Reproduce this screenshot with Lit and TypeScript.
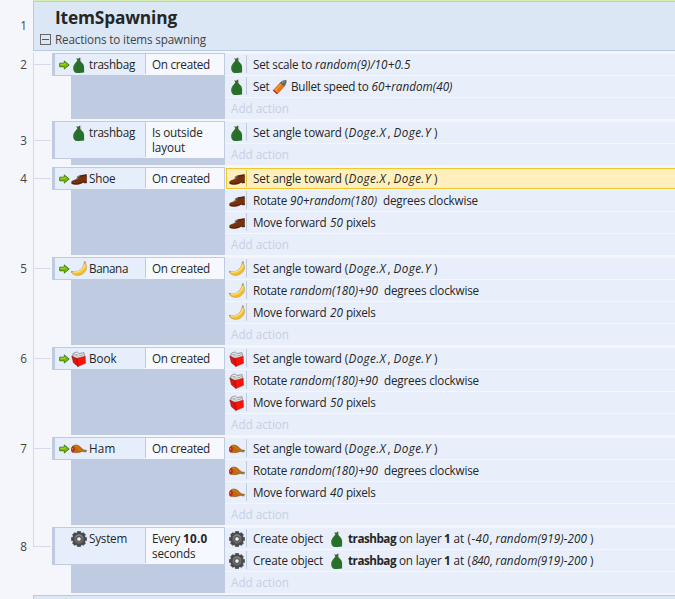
import { LitElement, html, css, svg, nothing } from 'lit';
import { customElement, property } from 'lit/decorators.js';
import { classMap } from 'lit/directives/class-map.js';

type Kind = 'n' | 'i' | 'b' | 'icon';
// text (or icon name), kind, distance to the next run, text width
type Run = [string, Kind, number, number];
interface Action { icon: string; runs: Run[]; selected?: boolean }
interface EventBlock {
  no: number; trigger: boolean; icon: string; name: Run;
  cond: Run[][]; actions: Action[];
}

const icons: Record<string, unknown> = {
  trashbag: svg`
    <path d="m5.2 1.3 2 .5L8.6.6l.9 1.2-.5 2.4H6.7z" fill="#3d6237"/>
    <path d="M6.2 3.6h3c.4 1.5 3.7 2.8 3.9 6.4v5.6c-2.6.5-6 .5-8.8.1C2.9 14.6 2.2 13 2.3 11c.1-3.9 3-5.2 3.9-7.4z" fill="#27702a"/>
    <path d="M4.2 15.2c-1-1.1-1.5-2.6-1.4-4.3.1-1.6.8-2.9 1.7-3.9" fill="none" stroke="#40803f" stroke-width=".6"/>
    <path d="m9 1 1.1-.6.1 1.2zm.1 1.8 1.2.7-.4.9z" fill="#cc949b"/>`,
  shoe: svg`
    <path d="M9.2 4.6 15.6 3.4c.4 1.5.3 3.2.1 4.8l.1 3.6-2.7.3-.7-.8-2.2 1.1c-2.6 1.3-6.8 1.5-9.3.4-.6-.6-.4-1.9 0-2.5 1-1 3.2-1.2 4.3-1.9 1.2-.8 1.3-2.5 2.1-3.1z" fill="#7a3009" stroke="#56382b" stroke-width=".5"/>
    <path d="m8.7 4.7 6.6-1.2-1 1.3-5 1z" fill="#3a2720"/>
    <path d="m5.6 5.3 2.9-.9.1 1-2.4.9zm-.4 1.9 2.6-.2-.8 1-2.1.2z" fill="#8b8a84"/>
    <path d="M.9 12.3c3 .9 6.6.7 9.3-.6l2.2-1 .8.9 2.6-.3" fill="none" stroke="#3a211a" stroke-width=".8"/>`,
  banana: svg`
    <path d="m13.3.8 1.3.1-.1 1.8c1.3 1.6 1.6 4.1.6 6.2-1.6 3.6-5.1 5.6-8.8 5.5-2.6-.1-4.7-1.2-5.7-2.9l.2-1.2C3.3 11.1 6.7 10.9 9 8.9c2.3-1.9 3.6-3.9 3.9-6z" fill="#f7c733" stroke="#b89b62" stroke-width=".6"/>
    <path d="M1.6 11c4.1.9 9.1-.6 11.4-4.7.5-.9.7-2 .7-2.9" fill="none" stroke="#ffe388" stroke-width="1.1"/>
    <path d="M1.6 12.6c4.7 2 10.9-.1 12.7-5" fill="none" stroke="#eab02a" stroke-width=".9"/>
    <path d="m13.1.6 1.5.1-.1 1.5-1.4.2z" fill="#a79b81"/><path d="m.4 10 1.1.6-.4 1.1-.7-.5z" fill="#777264"/>`,
  book: svg`
    <path d="M1 5.1 2.6 2 6 .9l1.9 1.6L13 1.6l.8 4-5.9 4.2L1.8 7z" fill="#c5c8cb" stroke="#77797b" stroke-width=".6"/>
    <path d="m3.3 3 3.1-.9 1.1 2.3M3 4.7l3.6.3m1.8-.9 4-1.1m-4 2.7 4.7-1.4" fill="none" stroke="#f5f5f5" stroke-width=".9"/>
    <path d="m3.5 3.9 3 .1m2.2.8 3.9-1.1" stroke="#76797c" stroke-width=".6"/>
    <path d="M.8 5.1 6 7.6l.9 7.8-4.5-3.6z" fill="#dc1510" stroke="#8c1916" stroke-width=".5"/>
    <path d="m6 7.6 8.2-2.4.3 7.1-7.6 3.1z" fill="#fb1209" stroke="#b01915" stroke-width=".5"/>
    <path d="m6 7.6.9 7.8" stroke="#8a1714" stroke-width=".7"/>`,
  ham: svg`
    <path d="M.9 6.4c.9-2.2 3-2.7 5.1-2.3 3 .6 4.4 3.2 6.4 4.7l3 .4.3.7-2.2 1-2.2-.4-3.2.9c-2.3.5-5.2.4-7-.1C.2 10.2.3 7.9.9 6.4z" fill="#c1690c" stroke="#795827" stroke-width=".5"/>
    <path d="M3.5 5.1C6.2 4.9 7 6.7 9.6 9" fill="none" stroke="#d88420" stroke-width=".9"/>
    <ellipse cx="2" cy="8.3" rx="1.5" ry="2.7" fill="#dc1d16" stroke="#8c2723" stroke-width=".4"/>
    <path d="M1.6 7v1.6" stroke="#f3a49c" stroke-width=".7"/>
    <path d="m12.2 9.6 3.4.2m-2.3.6 2.1.7" stroke="#837a68" stroke-width=".8"/>`,
  gear: svg`
    <g fill="#505050" stroke="#303030" stroke-width=".4">
      ${[0, 45, 90, 135, 180, 225, 270, 315].map(a => svg`<path d="M5.9 3 6.4.3h3.2l.5 2.7z" transform="rotate(${a} 8 8)"/>`)}
      <circle cx="8" cy="8" r="6.2"/>
    </g>
    <circle cx="8" cy="8" r="4.4" fill="#6c6c6c"/>
    <path d="M4.2 6.3a4.2 4.2 0 0 1 7.6 0" fill="none" stroke="#929292" stroke-width=".9"/>
    <circle cx="8" cy="8" r="2.3" fill="#eef1f7" stroke="#3b3b3b" stroke-width=".8"/>`,
  bullet: svg`
    <path d="m1.6 11.1 6.7-7.3 3.9 3.5-6.7 7.5z" fill="#e9780f" stroke="#b94a18" stroke-width=".6"/>
    <path d="m3.7 10.9 5.9-6.4" stroke="#f9a63a" stroke-width="1.1"/>
    <path d="M8.3 3.8C9.8 2.1 11.8 1.2 14.2 1.3c.1 2.3-.4 4.2-2 6z" fill="#66696c" stroke="#505356" stroke-width=".5"/>
    <path d="m10.1 3.5 2.3-1" stroke="#aaa" stroke-width=".8"/>
    <path d="m1.3 11.2 4 3.6" stroke="#ba2620" stroke-width="1.3"/>
    <path d="m2.4 10.2 3.9 3.5" stroke="#f3b57f" stroke-width=".6"/>`,
};

const angle: Run[] = [
  ['Set angle toward (', 'n', 95.5, 95], ['Doge.X', 'i', 39, 37.5], [',', 'n', 6, 3],
  ['Doge.Y', 'i', 40.5, 37.5], [')', 'n', 4, 4],
];
const rotate = (expr: string, w: number): Run[] => [
  ['Rotate', 'n', 37, 34], [expr, 'i', w + 6, w], ['degrees clockwise', 'n', 95, 95],
];
const move = (n: string): Run[] => [
  ['Move forward', 'n', 77, 73.5], [n, 'i', 16, 13], ['pixels', 'n', 29.5, 29.5],
];
const create = (x: string): Run[] => [
  ['Create object', 'n', 76, 70], ['trashbag', 'icon', 19, 16], ['trashbag', 'b', 51, 48],
  ['on layer', 'n', 45, 42.5], ['1', 'b', 9.5, 7], ['at (', 'n', 18, 17.5], [x, 'i', 18, 17.5],
  [',', 'n', 6, 3], ['random(919)-200', 'i', 94.5, 91.5], [')', 'n', 4, 4],
];
const created: Run[][] = [[['On created', 'n', 58, 58]]];
const spawn = (icon: string, expr: string, w: number, dist: string, selected = false): Action[] => [
  { icon, runs: angle, selected }, { icon, runs: rotate(expr, w) }, { icon, runs: move(dist) },
];

const events: EventBlock[] = [
  { no: 2, trigger: true, icon: 'trashbag', name: ['trashbag', 'n', 46, 46], cond: created, actions: [
    { icon: 'trashbag', runs: [['Set scale to', 'n', 62, 59], ['random(9)/10+0.5', 'i', 95.5, 95.5]] },
    { icon: 'trashbag', runs: [['Set', 'n', 19, 16.5], ['bullet', 'icon', 19, 16],
      ['Bullet speed to', 'n', 80.5, 77.5], ['60+random(40)', 'i', 81, 81]] },
  ] },
  { no: 3, trigger: false, icon: 'trashbag', name: ['trashbag', 'n', 46, 46],
    cond: [[['Is outside', 'n', 50.5, 50.5]], [['layout', 'n', 33, 33]]],
    actions: [{ icon: 'trashbag', runs: angle }] },
  { no: 4, trigger: true, icon: 'shoe', name: ['Shoe', 'n', 26.5, 26.5], cond: created, actions: spawn('shoe', '90+random(180)', 87, '50', true) },
  { no: 5, trigger: true, icon: 'banana', name: ['Banana', 'n', 39, 39], cond: created, actions: spawn('banana', 'random(180)+90', 88, '20') },
  { no: 6, trigger: true, icon: 'book', name: ['Book', 'n', 27.5, 27.5], cond: created, actions: spawn('book', 'random(180)+90', 88, '50') },
  { no: 7, trigger: true, icon: 'ham', name: ['Ham', 'n', 26.5, 26.5], cond: created, actions: spawn('ham', 'random(180)+90', 88, '40') },
  { no: 8, trigger: false, icon: 'gear', name: ['System', 'n', 38, 38],
    cond: [[['Every', 'n', 31, 28], ['10.0', 'b', 24.5, 24.5]], [['seconds', 'n', 43.5, 43.5]]],
    actions: [{ icon: 'gear', runs: create('-40') }, { icon: 'gear', runs: create('840') }] },
];

/** Text run tracked so that its glyphs fill a given width. */
@customElement('text-run')
class TextRun extends LitElement {
  @property() text = '';
  @property({ type: Number }) width = 0;
  @property({ type: Number }) advance = 0;
  static styles = css`
    :host { display: block; flex: none; white-space: pre; }
    .box { display: block; }
  `;
  updated() {
    const g = this.renderRoot.querySelector<HTMLElement>('.glyphs')!;
    g.style.letterSpacing = '0px';
    g.style.letterSpacing = `${(this.width - g.getBoundingClientRect().width) / this.text.length}px`;
  }
  render() {
    return html`<span class="box" style="width:${this.advance}px"><span class="glyphs">${this.text}</span></span>`;
  }
}

@customElement('app-root')
class AppRoot extends LitElement {
  static styles = css`
    :host { display: block; height: 599px; overflow: hidden; background: #f5f6fb; color: #262626;
      font: 11.7px/21px "Open Sans", "Noto Sans", sans-serif; }
    .top { height: 1px; margin-left: 33px; background: #d6efb4; }
    .group { display: flex; height: 50px; margin-bottom: 2px; }
    .no { width: 27px; flex: none; text-align: right; color: #444; }
    .group .no { padding-top: 14px; margin-right: 6px; }
    .head { flex: 1; box-sizing: border-box; border: 1px solid #b7cce4; border-right: 0; background: #dbe7f5; }
    .title { display: block; font-size: 17.3px; line-height: 24px; font-weight: 700; margin: 4px 0 0 21px; }
    .sub { display: flex; align-items: center; height: 18px; color: #444; }
    .fold { width: 9px; height: 9px; border: 1px solid #666; margin: 1px 4px 0 6px; display: flex; align-items: center; justify-content: center; }
    .fold::before { content: ""; width: 7px; height: 1px; background: #555; }
    .event { display: flex; margin-bottom: 2px; position: relative; }
    .rail { width: 52px; flex: none; display: flex; }
    .tree { width: 18px; margin: 0 0 -2px 6px; border-left: 1px solid #d4daea; }
    .tree::before { content: ""; display: block; height: 11px; width: 17px; border-bottom: 1px solid #d4daea; }
    .tall .tree::before { height: 19px; }
    .last .tree { height: 20px; margin-bottom: 0; }
    .rail .no { padding-top: 1px; height: 21px; }
    .tall .rail .no { padding-top: 9px; }
    .conds { width: 173px; flex: none; display: flex; flex-direction: column; background: linear-gradient(#bfcbe0, #bfcbe0) 19px 0 no-repeat; }
    .cond { display: flex; box-sizing: border-box; height: 23px; background: #bfcbe0; padding: 1px 1px 1px 3px; }
    .tall .cond { height: 38px; }
    .obj { width: 90px; flex: none; background: #e5eefa; display: flex; }
    .arrow { width: 11px; height: 10px; margin: 6px 1px 0 4px; flex: none; }
    .obj .ico { margin: 3px 2px 0 0; }
    .what { flex: 1; background: #f5f8ff; padding: 0 0 0 6px; border-left: 1px solid #bfcbe0;
      border-image: linear-gradient(#f5f8ff 1px, #bfcbe0 1px, #bfcbe0 calc(100% - 2px), #f5f8ff calc(100% - 2px)) 1; }
    .line { display: flex; height: 15px; }
    .ico { width: 16px; height: 16px; flex: none; display: block; }
    .acts { flex: 1; min-width: 0; padding-top: 1px; display: grid; gap: 1px; }
    .act { display: flex; box-sizing: border-box; height: 21px; background: #e8effb; padding-left: 4px; }
    .act > .ico { margin-top: 3px; }
    .bar { width: 1px; height: 18px; margin: 1px 6px 0 1px; background: #bfcbe0; flex: none; }
    .sel { margin-left: 1px; padding-left: 2px; border: 1px solid #f0c62e; border-right: 0; background: #ffefbd; line-height: 19px; }
    .sel > .ico { margin-top: 2px; }
    .sel .bar { height: 17px; background: #e8c448; }
    .add { padding-left: 6px; color: #c6d0e5; }
    .act .run-icon { margin: 3px 0 0; }
    .holder { flex: none; }
    .i { font-style: italic; }
    .b { font-weight: 700; }
    .foot { height: 8px; margin-left: 33px; border: 1px solid #b7cce4; border-right: 0; background: #dbe7f5; }
  `;

  private icon(name: string, cls = '') {
    return html`<svg class="ico ${cls}" viewBox="0 0 16 16">${icons[name]}</svg>`;
  }
  private run([text, kind, advance, width]: Run) {
    return kind === 'icon'
      ? html`<span class="holder" style="width:${advance}px">${this.icon(text, 'run-icon')}</span>`
      : html`<text-run class=${kind} .text=${text} .advance=${advance} .width=${width}></text-run>`;
  }
  private event(e: EventBlock) {
    return html`<section class=${classMap({ event: true, tall: e.cond.length > 1, last: e.no === 8 })}>
      <div class="rail"><div class="no">${e.no}</div><div class="tree"></div></div>
      <div class="conds"><div class="cond">
        <div class="obj">
          <svg class="arrow" viewBox="0 0 11 10">${e.trigger ? svg`
            <path d="M.7 3.2h4.6V.9L10.2 5 5.3 9.1V6.8H.7z" fill="#79b900" stroke="#3d7c08" stroke-width=".9"/>
            <path d="M1.4 4.3H6V3" stroke="#b4df49" fill="none" stroke-width=".8"/>` : nothing}</svg>
          ${this.icon(e.icon)}${this.run(e.name)}
        </div>
        <div class="what">${e.cond.map(l => html`<div class="line">${l.map(r => this.run(r))}</div>`)}</div>
      </div></div>
      <div class="acts">
        ${e.actions.map(a => html`<div class=${classMap({ act: true, sel: !!a.selected })}>
          ${this.icon(a.icon)}<span class="bar"></span>${a.runs.map(r => this.run(r))}</div>`)}
        <div class="act add">${this.run(['Add action', 'n', 58, 58])}</div>
      </div>
    </section>`;
  }
  render() {
    return html`
      <div class="top"></div>
      <header class="group"><div class="no">1</div>
        <div class="head">
          <div class="title">${this.run(['ItemSpawning', 'n', 122, 122])}</div>
          <div class="sub"><span class="fold"></span>${this.run(['Reactions to items spawning', 'n', 151, 151])}</div>
        </div>
      </header>
      ${events.map(e => this.event(e))}
      <div class="foot"></div>`;
  }
}
